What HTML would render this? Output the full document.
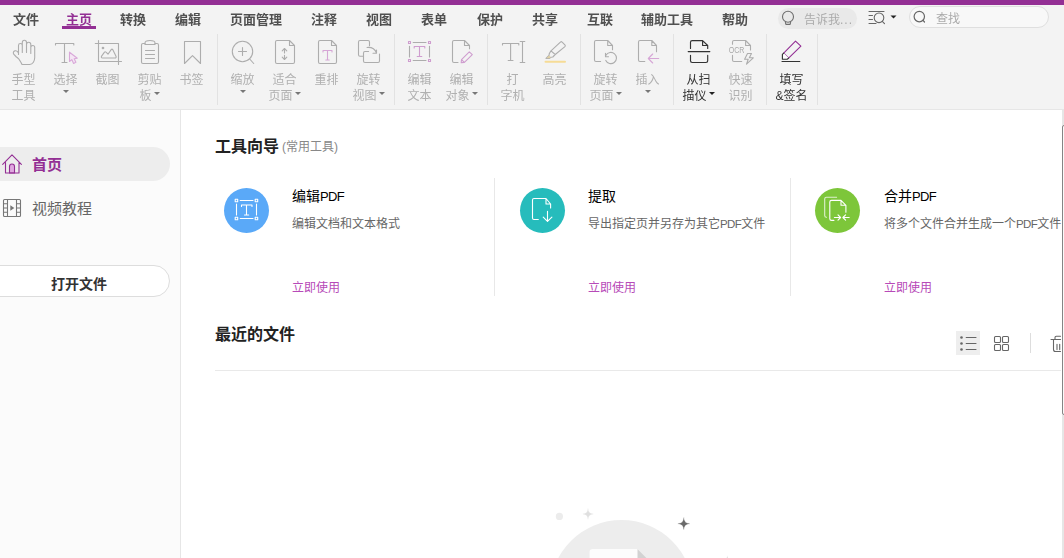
<!DOCTYPE html>
<html lang="zh-CN">
<head>
<meta charset="utf-8">
<title>PDF</title>
<style>
*{margin:0;padding:0;box-sizing:border-box}
html,body{width:1064px;height:558px;overflow:hidden;background:#fff}
body{position:relative;font-family:"Liberation Sans","Noto Sans CJK SC",sans-serif;color:#333}
.abs{position:absolute}
#topbar{left:0;top:0;width:1064px;height:5px;background:#932f94}
#ribbon{left:0;top:5px;width:1064px;height:104px;background:#f3f3f3}
#ribline{left:0;top:109px;width:1064px;height:1px;background:#e6e6e6}
.menu{position:absolute;top:11px;height:18px;line-height:18px;font-size:13px;font-weight:bold;color:#505050;white-space:nowrap}
.menu.act{color:#932f94}
#underline{left:62px;top:26px;width:34px;height:3px;background:#932f94}
.sep{position:absolute;top:34px;width:1px;height:71px;background:#e2e2e2}
.lbl{position:absolute;font-size:12px;line-height:16px;color:#b0b0b0;white-space:nowrap;text-align:center;transform:translateX(-50%)}
.lbl.dk{color:#333}
.arr{display:inline-block;width:0;height:0;border-left:3px solid transparent;border-right:3px solid transparent;border-top:3px solid #777;vertical-align:middle;margin-left:2px;position:relative;top:-3px}
.arr.dk{border-top-color:#222}
.arrb{position:absolute;width:0;height:0;border-left:3px solid transparent;border-right:3px solid transparent;border-top:3px solid #777}
svg{position:absolute;overflow:visible}
#side{left:0;top:110px;width:180px;height:448px;background:#fbfbfb}
#sideline{left:180px;top:110px;width:1px;height:448px;background:#e6e6e6}

.circ{top:188px;width:45px;height:45px;border-radius:50%}
.vdiv{top:178px;width:1px;height:118px;background:#e8e8e8}
.ct{top:186px;font-size:14px;line-height:20px;color:#000;white-space:nowrap}
.cd{top:215px;font-size:12px;line-height:18px;color:#666;white-space:nowrap}
.cl{top:279px;font-size:12px;line-height:18px;color:#b74ab8;white-space:nowrap}
.p1{font-size:13px;letter-spacing:-.6px}.p2{font-size:11.500px;letter-spacing:-.6px}
#rb{position:absolute;left:0;top:0;width:1064px;height:110px;will-change:transform}
</style>
</head>
<body>
<div id="rb">
<div id="topbar" class="abs"></div>
<div id="ribbon" class="abs"></div>
<div id="ribline" class="abs"></div>

<!-- menu -->
<div class="menu" style="left:13px">文件</div>
<div class="menu act" style="left:66px">主页</div>
<div class="menu" style="left:120px">转换</div>
<div class="menu" style="left:175px">编辑</div>
<div class="menu" style="left:230px">页面管理</div>
<div class="menu" style="left:311px">注释</div>
<div class="menu" style="left:366px">视图</div>
<div class="menu" style="left:421px">表单</div>
<div class="menu" style="left:477px">保护</div>
<div class="menu" style="left:532px">共享</div>
<div class="menu" style="left:587px">互联</div>
<div class="menu" style="left:641px">辅助工具</div>
<div class="menu" style="left:722px">帮助</div>
<div id="underline" class="abs"></div>

<!-- separators -->
<div class="sep" style="left:217px"></div>
<div class="sep" style="left:394px"></div>
<div class="sep" style="left:487px"></div>
<div class="sep" style="left:580px"></div>
<div class="sep" style="left:673px"></div>
<div class="sep" style="left:766px"></div>
<div class="sep" style="left:817px"></div>

<!-- ribbon labels -->
<div class="lbl" style="left:23.5px;top:72px">手型<br>工具</div>
<div class="lbl" style="left:65.5px;top:72px">选择</div><div class="arrb" style="left:62.5px;top:90px"></div>
<div class="lbl" style="left:107.5px;top:72px">截图</div>
<div class="lbl" style="left:149.5px;top:72px">剪贴<br>板<span class="arr"></span></div>
<div class="lbl" style="left:191.5px;top:72px">书签</div>
<div class="lbl" style="left:242.5px;top:72px">缩放</div><div class="arrb" style="left:239.5px;top:90px"></div>
<div class="lbl" style="left:284.5px;top:72px">适合<br>页面<span class="arr"></span></div>
<div class="lbl" style="left:326.5px;top:72px">重排</div>
<div class="lbl" style="left:368.5px;top:72px">旋转<br>视图<span class="arr"></span></div>
<div class="lbl" style="left:419.5px;top:72px">编辑<br>文本</div>
<div class="lbl" style="left:461.5px;top:72px">编辑<br>对象<span class="arr"></span></div>
<div class="lbl" style="left:512.5px;top:72px">打<br>字机</div>
<div class="lbl" style="left:554.5px;top:72px">高亮</div>
<div class="lbl" style="left:605.5px;top:72px">旋转<br>页面<span class="arr"></span></div>
<div class="lbl" style="left:647.5px;top:72px">插入</div><div class="arrb" style="left:644.5px;top:90px"></div>
<div class="lbl dk" style="left:698.5px;top:72px">从扫<br>描仪<span class="arr dk"></span></div>
<div class="lbl" style="left:740.5px;top:72px">快速<br>识别</div>
<div class="lbl dk" style="left:791.5px;top:72px">填写<br>&amp;签名</div>


<!-- ribbon icons -->
<svg id="ribicons" width="1064" height="110" viewBox="0 0 1064 110" style="left:0;top:0" fill="none" stroke="#adadad" stroke-width="1.1" stroke-linecap="round" stroke-linejoin="round">
<!-- hand -->
<path d="M18.5 54.5V45.4a1.9 1.9 0 0 1 3.8 0V52.5M22.3 45.4V42.4a2.1 2.1 0 0 1 4.2 0V52.5M26.5 44.4a2.15 2.15 0 0 1 4.3 0V53.5M30.8 47.4a1.95 1.95 0 0 1 3.9 0V57.5c0 3.5-1.8 7-5 7H22c-1.500-2.6-2.600-6.200-5.600-7.500L13.700 54.200c-1-1.500 0-3 1.300-3.400 1.500-.4 2.700.4 3.500 2.200"/>
<!-- select T -->
<path d="M55.500 45V43.500H73.800V45M64.500 43.500V62.500M62 62.500H67"/>
<path d="M69.500 52.200V61.500L71.800 59.600 73.600 63.400 75.900 62.300 74.200 58.700 77.300 58.200Z" stroke="#d9a8d9" fill="#f4e6f4"/>
<!-- snapshot -->
<path d="M98.500 40.600V61.500H121.500M95.300 43.500H118.500V64.400"/>
<circle cx="103" cy="48" r=".8" fill="#adadad"/>
<path d="M102.500 58c-1.200 0-1.500-1-.9-1.900L104.500 52.200c.5-.6 1-.6 1.500 0L108 54.200 111.200 49.600c.5-.6 1.100-.6 1.500 0L116 56.200c.4.900 0 1.800-1 1.800Z"/>
<!-- clipboard -->
<path d="M145 43.500H143c-.9 0-1.500.6-1.500 1.500V62c0 .9.600 1.500 1.500 1.500H157c.9 0 1.500-.6 1.500-1.500V45c0-.9-.6-1.500-1.500-1.500H155"/>
<path d="M145 44.500V43c0-1.500 2.200-2.500 5-2.500s5 1 5 2.500V44.500Z"/>
<path d="M145.500 50.500H154.500M145.500 54.500H154.500M145.500 58.500H154.500"/>
<!-- bookmark -->
<path d="M184.500 41.500H200.500V63.500L192.500 55.700 184.500 63.500Z"/>
<!-- zoom -->
<circle cx="242.500" cy="51.500" r="10.200"/>
<path d="M238.500 51.500H246.500M242.500 47.500V55.500M249.700 59 253.700 63.500"/>
<!-- fit page -->
<path d="M289.500 40.500H277c-.9 0-1.500.6-1.500 1.500V62c0 .9.600 1.500 1.500 1.500H293c.9 0 1.500-.6 1.500-1.500V45.500ZM289.500 40.500V45.500H294.500"/>
<path d="M284.500 48.500V53M284.500 55.200V59.500M282.200 50.800 284.500 48.500 286.800 50.800M282.200 57.200 284.500 59.500 286.800 57.200"/>
<!-- reflow -->
<path d="M331.500 40.500H320c-.9 0-1.500.6-1.500 1.500V62c0 .9.600 1.500 1.500 1.500H335c.9 0 1.500-.6 1.500-1.500V45.500ZM331.500 40.500V45.500H336.500"/>
<path d="M323 52V50.500H332V52M327.500 50.500V60M325.800 60H329.200" stroke="#d6a6d6"/>
<!-- rotate view -->
<path d="M369.500 45.700V42c0-.9-.6-1.500-1.500-1.500H360c-.9 0-1.500.6-1.500 1.500V54.800c0 .9.600 1.500 1.500 1.500H363.500"/>
<path d="M368.600 51.500H365c-.9 0-1.500.6-1.500 1.500V61c0 .9.600 1.500 1.500 1.500H378c.9 0 1.500-.6 1.500-1.500V54"/>
<path d="M367 47.500c4.500-.5 8 1.700 9.500 5.500M376.500 50V53.200H373"/>
<!-- edit text -->
<path d="M413.200 42.500H426M413.200 60.500H426M409.500 46.200V57M429.500 46.200V57"/>
<g stroke="#cf9dcf"><rect x="408.500" y="41.500" width="2" height="2"/><rect x="428.500" y="41.500" width="2" height="2"/><rect x="408.500" y="59.500" width="2" height="2"/><rect x="428.500" y="59.500" width="2" height="2"/>
<path d="M414.200 48V46.500H424.800V48M419.500 46.500V56.500M417.200 56.500H421.800"/></g>
<!-- edit object -->
<path d="M458 62.500H454c-.9 0-1.500-.6-1.500-1.500V42c0-.9.600-1.500 1.500-1.500H464.500L469.500 45.500V48.800M464.500 40.500V45.500H469.500"/>
<path d="M461.200 62.600 461.500 59.600 469.300 51.800 472.300 54.600 464.400 62.400ZM461.500 59.600 464.400 62.400" stroke="#cf9dcf"/>
<!-- typewriter -->
<path d="M502.500 45V43.500H518.800V45M510.600 43.500V60.500M508.200 60.500H513M522.500 41.500V62.500M520.200 41.500H524.800M520.200 62.500H524.800"/>
<!-- highlight -->
<path d="M545.500 61.700H565" stroke="#f6dc96" stroke-width="2"/>
<path d="M560.400 42.100c.5-.5 1.200-.5 1.700 0L564.900 44.900c.5.500.5 1.200 0 1.700L555.200 54.500 551 50.800ZM551 50.800 549.300 53.600 549 55.500 546 58.400H549.500L551 57.300 552.800 57 555.200 54.500"/>
<path d="M546.300 58.200 549.200 55.600 550.800 57.200 549.500 58.200Z" fill="#e0cfa0" stroke="none"/>
<!-- rotate page -->
<path d="M600.600 61.500H596c-.9 0-1.500-.6-1.500-1.500V42c0-.9.600-1.500 1.500-1.500H607.700L612.500 45.500V49.700M607.700 40.500V45.500H612.500"/>
<path d="M606 55.200a5.600 5.600 0 1 1-.2 5.200M605.500 53.300V56.700H608.500"/>
<!-- insert -->
<path d="M644.800 61.500H640c-.9 0-1.500-.6-1.500-1.500V42c0-.9.600-1.500 1.500-1.500H651.800L656.500 45.500V51.800M651.800 40.500V45.500H656.500"/>
<path d="M658.700 58.500H648.500M652.700 54 648.300 58.500 652.700 63" stroke="#d6a6d6"/>
<!-- scanner -->
<g stroke="#333" stroke-width="1.150">
<path d="M690.500 48.400V42.300c0-1 .7-1.700 1.700-1.700H702.600L707.700 45.500V48.400M702.600 40.600V45.500H707.700"/>
<path d="M688.200 51.600H709.800"/>
<path d="M690.500 55.200V60.800c0 1 .7 1.700 1.700 1.700H706c1 0 1.700-.7 1.700-1.700V55.200"/>
</g>
<!-- OCR -->
<path d="M732.500 44.300V42c0-.9.600-1.500 1.500-1.500H745.600L750.500 45.500V50M745.600 40.500V45.500H750.500M732.500 55.400V60c0 .9.600 1.500 1.500 1.500H741.700"/>
<path d="M747.500 53.500H751.500L749.300 57.800H753.300L746.500 64.200 748.200 59.300H744.600Z"/>
<text x="728.700" y="52.800" font-family="Liberation Sans, sans-serif" font-size="8.200" textLength="15.800" lengthAdjust="spacingAndGlyphs" fill="#a8a8a8" stroke="none">OCR</text>
<!-- fill & sign -->
<path d="M795.500 41.200 800.900 46.200 788.600 58.100 783.700 53.100Z" stroke="#932f94" stroke-width="1.100"/>
<path d="M783.700 53.100 782.400 54.400V59.200H787.200L788.600 58.100" stroke="#333" stroke-width="1.150" fill="#fff"/>
<path d="M782 61.500H799.800" stroke="#333" stroke-width="1.150"/>
</svg>


<!-- tell me / find / search -->
<div class="abs" style="left:778px;top:8px;width:79px;height:21px;border-radius:10.500px;background:#e9e9e9"></div>
<div class="abs" style="left:804px;top:11px;font-size:12px;line-height:18px;color:#aaa;white-space:nowrap">告诉我<span style="letter-spacing:1px">...</span></div>
<div class="abs" style="left:909px;top:6px;width:140px;height:22px;border-radius:11px;background:#f8f8f8;border:1px solid #dfdfdf"></div>
<div class="abs" style="left:936px;top:10px;font-size:12px;line-height:18px;color:#aaa;white-space:nowrap">查找</div>
<svg width="1064" height="34" viewBox="0 0 1064 34" style="left:0;top:0" fill="none" stroke="#777" stroke-width="1.100" stroke-linecap="round" stroke-linejoin="round">
<circle cx="788" cy="16.800" r="5.500" stroke="#6e6e6e"/><path d="M785.400 22.400 785.900 24.400H790.100L790.600 22.400" stroke="#6e6e6e"/>
<path d="M869 11.500H884M869 15.500H872.500M869 19.500H872.500M869 23.500H876" stroke="#666"/>
<circle cx="879" cy="17.800" r="4.800" stroke="#666"/>
<path d="M882.300 21.300 884.500 23.700" stroke="#666"/>
<path d="M890.500 15.500H896.500L893.500 18.500Z" fill="#222" stroke="none"/>
<circle cx="919.300" cy="16.600" r="5.200" stroke="#666" stroke-width="1.200"/>
<path d="M923 20.300 924.500 22" stroke="#666" stroke-width="1.200"/>
</svg>

</div>
<!-- sidebar -->
<div id="side" class="abs"></div>
<div id="sideline" class="abs"></div>
<div class="abs" style="left:-20px;top:147px;width:190px;height:34px;border-radius:17px;background:#ededed"></div>
<div class="abs" style="left:32px;top:154px;font-size:15px;line-height:22px;font-weight:bold;color:#932f94;white-space:nowrap">首页</div>
<div class="abs" style="left:32px;top:198px;font-size:15px;line-height:22px;color:#666;white-space:nowrap">视频教程</div>
<div class="abs" style="left:-20px;top:265px;width:190px;height:32px;border-radius:16px;background:#fff;border:1px solid #ddd"></div>
<div class="abs" style="left:51px;top:273px;font-size:14px;line-height:22px;font-weight:bold;color:#333;white-space:nowrap">打开文件</div>
<svg width="30" height="80" viewBox="0 150 30 80" style="left:0;top:150px" fill="none" stroke-width="1.100" stroke-linecap="round" stroke-linejoin="round">
<path d="M9.500 173V166.500a2.500 2.500 0 0 1 5 0V173Z" fill="#e0a8e0" stroke="#932f94"/>
<path d="M2.700 164.300 12 154.800 21.400 164.300M5.500 162.500V173H19V162.500" stroke="#932f94"/>
<g stroke="#777"><rect x="3.500" y="199.500" width="17" height="17" rx="1"/>
<path d="M7.500 199.500V216.500M16.500 199.500V216.500M3.500 203.800H7.500M3.500 208H7.500M3.500 212.200H7.500M16.500 203.800H20.500M16.500 208H20.500M16.500 212.200H20.500"/>
<path d="M10.300 205.300V210.700L14.400 208Z" fill="#777" stroke="none"/></g>
</svg>


<div class="abs" style="left:215px;top:135px;font-size:16px;line-height:24px;font-weight:bold;color:#222;white-space:nowrap">工具向导</div>
<div class="abs" style="left:282px;top:138px;font-size:12px;line-height:18px;color:#888;white-space:nowrap">(常用工具)</div>

<div class="abs circ" style="left:224px;background:#5aa9f8"></div>
<div class="abs circ" style="left:520px;background:#26bcbc"></div>
<div class="abs circ" style="left:815px;background:#7dc63a"></div>
<div class="abs vdiv" style="left:494px"></div>
<div class="abs vdiv" style="left:790px"></div>

<div class="abs ct" style="left:292px">编辑<span class="p1">PDF</span></div>
<div class="abs cd" style="left:292px">编辑文档和文本格式</div>
<div class="abs cl" style="left:292px">立即使用</div>
<div class="abs ct" style="left:588px">提取</div>
<div class="abs cd" style="left:588px">导出指定页并另存为其它<span class="p2">PDF</span>文件</div>
<div class="abs cl" style="left:588px">立即使用</div>
<div class="abs ct" style="left:884px">合并<span class="p1">PDF</span></div>
<div class="abs cd" style="left:884px">将多个文件合并生成一个<span class="p2">PDF</span>文件</div>
<div class="abs cl" style="left:884px">立即使用</div>

<div class="abs" style="left:215px;top:323px;font-size:16px;line-height:24px;font-weight:bold;color:#222;white-space:nowrap">最近的文件</div>
<div class="abs" style="left:956px;top:331px;width:24px;height:24px;background:#eee"></div>
<div class="abs" style="left:1030px;top:333px;width:1px;height:20px;background:#ddd"></div>
<div class="abs" style="left:215px;top:370px;width:846px;height:1px;background:#e9e9e9"></div>


<svg width="1064" height="448" viewBox="0 110 1064 448" style="left:0;top:110px" fill="none" stroke="#fff" stroke-width="1.100" stroke-linecap="round" stroke-linejoin="round">
<!-- card 1 icon -->
<g><rect x="235.200" y="199.200" width="2.500" height="2.500"/><rect x="255.200" y="199.200" width="2.500" height="2.500"/><rect x="235.200" y="217.200" width="2.500" height="2.500"/><rect x="255.200" y="217.200" width="2.500" height="2.500"/>
<path d="M240.200 200.500H253M240.200 218.500H253M236.500 204V215M256.500 204V215"/>
<path d="M241.500 206.500V205H252V206.500M246.500 205V215M244.500 215H248.700"/></g>
<!-- card 2 icon -->
<path d="M538.300 219.500H534c-.9 0-1.500-.6-1.500-1.500V200c0-.9.600-1.500 1.500-1.500H546L550.600 204V208M546 198.500V204H550.600"/>
<path d="M547.500 211.200V221.400M543.200 217.100 547.500 221.400 551.900 217.100"/>
<!-- card 3 icon -->
<path d="M836.600 197.300H826.500c-1 0-1.800.8-1.800 1.800V215.500c0 1 .8 1.800 1.800 1.800" stroke-opacity=".75"/>
<path d="M833.900 220.400H831.500c-1 0-1.700-.7-1.700-1.700V202.100c0-1 .7-1.700 1.700-1.700H841L845.900 205.300V212.300M841 200.400V205.300H845.900"/>
<path d="M834.400 217.500H840.500M838 214.800 840.600 217.500 838 220.200M849.200 217.500H843M845.600 214.800 842.900 217.500 845.600 220.200"/>
<!-- view toggles -->
<g stroke="#666"><path d="M966.200 337.500H976M966.200 343.500H976M966.200 349.500H976"/>
<circle cx="961.500" cy="337.500" r="1.300" fill="#666" stroke="none"/><circle cx="961.500" cy="343.500" r="1.300" fill="#666" stroke="none"/><circle cx="961.500" cy="349.500" r="1.300" fill="#666" stroke="none"/>
<rect x="994.500" y="336.500" width="6" height="6" rx="1"/><rect x="1002.500" y="336.500" width="6" height="6" rx="1"/><rect x="994.500" y="344.500" width="6" height="6" rx="1"/><rect x="1002.500" y="344.500" width="6" height="6" rx="1"/>
<path d="M1051 339.500H1060.500M1055 339.500V337.500c0-.8.500-1.300 1.300-1.300H1060.500M1053.500 339.500V349.500c0 1.200.8 2 2 2H1060.500M1057 344.200V349.600M1059.700 344.200V349.600"/></g>
<!-- illustration -->
<g stroke="none">
<circle cx="621.500" cy="591.500" r="71.500" fill="#ededed"/>
<circle cx="559.400" cy="516.400" r="3.600" fill="#ececec"/>
<path d="M588 508.800Q588.200 513.800 593.200 514Q588.200 514.200 588 519.200Q587.800 514.200 582.800 514Q587.800 513.800 588 508.800Z" fill="#e0e0e0" stroke="#e0e0e0" stroke-width=".2"/>
<path d="M683.800 517.700Q684 523.500 689.800 523.700Q684 523.900 683.800 529.700Q683.600 523.900 677.800 523.700Q683.600 523.500 683.800 517.700Z" fill="#6a6a6a" stroke="#6a6a6a" stroke-width=".15"/>
<path d="M727.300 555.200Q727.600 560.500 733 561H721.600Q727 560.500 727.300 555.200Z" fill="#ddd"/>
<path d="M592.500 549H637.500L648 559.500V570H589.500V552c0-1.700 1.300-3 3-3Z" fill="#fcfcfc"/>
<path d="M637.500 549 648 559.500H637.500Z" fill="#d2d2d2"/>
</g>
</svg>
<!-- scrollbar -->
<div class="abs" style="left:1062px;top:110px;width:2px;height:448px;background:#e6e6e6"></div>
<div class="abs" style="left:1062px;top:125px;width:4px;height:290px;background:#fafafa;border:1px solid #858585;border-radius:2px"></div>



</body>
</html>
